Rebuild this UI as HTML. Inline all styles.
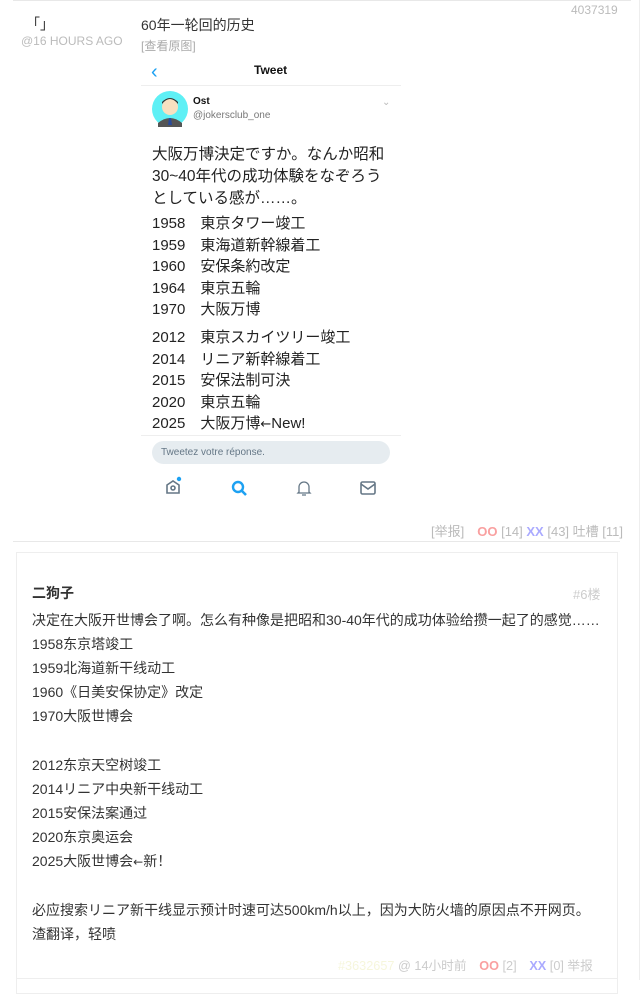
<!DOCTYPE html>
<html><head><meta charset="utf-8"><style>
body{margin:0;width:641px;height:980px;background:#fff;position:relative;overflow:hidden;font-family:"Liberation Sans","Noto Sans CJK SC",sans-serif;color:#333}
.a{position:absolute;white-space:nowrap}
.g{color:#bbb}
.tw{font-family:"Liberation Sans","Noto Sans CJK JP",sans-serif;color:#222}
.ar{font-family:"DejaVu Sans",sans-serif}
</style></head><body>
<div class="a" style="left:13px;top:0;width:618px;height:1px;background:#e8e8e8"></div>
<div class="a" style="left:639px;top:0;width:1px;height:980px;background:#eee"></div>
<div class="a g" style="left:571px;top:3px;font-size:12px">4037319</div>
<div class="a" style="left:26px;top:14px;font-size:14px;color:#333">「」</div>
<div class="a g" style="left:21px;top:34px;font-size:12px">@16 HOURS AGO</div>
<div class="a" style="left:141px;top:15px;font-size:14px">60年一轮回的历史</div>
<div class="a g" style="left:141px;top:37px;font-size:12px;color:#aaa">[查看原图]</div>

<div class="a" style="left:151px;top:61px;font-size:20px;color:#1da1f2">‹</div>
<div class="a" style="left:254px;top:63px;font-size:12px;font-weight:bold;color:#111">Tweet</div>
<div class="a" style="left:141px;top:85px;width:260px;height:1px;background:#eee"></div>
<svg class="a" style="left:152px;top:91px" width="36" height="36"><circle cx="18" cy="18" r="18" fill="#5ef0f5"/><circle cx="18" cy="16" r="8" fill="#f7e0c0"/><path d="M10 13q8-10 16 0v-2q-8-8-16 0z" fill="#333"/><path d="M6 32q12-10 24 0v4H6z" fill="#555"/><path d="M17 27h2l1 7h-4z" fill="#2a4a9a"/></svg>
<div class="a" style="left:193px;top:96px;font-size:10px;font-weight:bold;color:#111">Ost</div>
<div class="a" style="left:193px;top:110px;font-size:10px;color:#777">@jokersclub_one</div>
<div class="a" style="left:382px;top:97px;font-size:10px;color:#bbb">⌄</div>
<div class="a tw" style="left:152px;top:144px;font-size:15.5px;line-height:22px">大阪万博決定ですか。なんか昭和<br>30~40年代の成功体験をなぞろう<br>としている感が……。</div>
<div class="a tw" style="left:152px;top:213px;font-size:15px;line-height:21.5px">1958　東京タワー竣工<br>1959　東海道新幹線着工<br>1960　安保条約改定<br>1964　東京五輪<br>1970　大阪万博</div>
<div class="a tw" style="left:152px;top:327px;font-size:15px;line-height:21.5px">2012　東京スカイツリー竣工<br>2014　リニア新幹線着工<br>2015　安保法制可決<br>2020　東京五輪<br>2025　大阪万博<span class="ar" style="font-size:13px">←</span>New!</div>
<div class="a" style="left:141px;top:435px;width:260px;height:1px;background:#eee"></div>
<div class="a" style="left:152px;top:441px;width:238px;height:23px;border-radius:12px;background:#e6ecf0;font-size:10px;color:#657786;line-height:23px;text-indent:9px">Tweetez votre réponse.</div>
<svg class="a" style="left:160px;top:476px" width="230" height="22" fill="none" stroke-width="1.6">
<path d="M7 9l6-4 6 4v8H7z" stroke="#657786"/><circle cx="13" cy="12" r="2" stroke="#657786"/><circle cx="19" cy="3" r="2.2" fill="#1da1f2" stroke="none"/>
<circle cx="78" cy="11" r="5" stroke="#1da1f2" stroke-width="2.4"/><path d="M82 15l4 4" stroke="#1da1f2" stroke-width="2.6"/>
<path d="M139 16v-5a5 5 0 0 1 10 0v5l1 1h-12zM142 19h4" stroke="#657786" stroke-width="1.3"/>
<rect x="201" y="6" width="14" height="12" rx="1.5" stroke="#657786"/><path d="M201 8l7 5 7-5" stroke="#657786"/>
</svg>

<div class="a g" style="left:431px;top:521px;font-size:13px">[举报]　<b style="color:#f9a0a0">OO</b> [14] <b style="color:#aaaaff">XX</b> [43] 吐槽 [11]</div>
<div class="a" style="left:13px;top:541px;width:607px;height:1px;background:#e8e8e8"></div>

<div class="a" style="left:16px;top:552px;width:600px;height:440px;border:1px solid #eee"></div>
<div class="a" style="left:32px;top:583px;font-size:14px;font-weight:bold;color:#333">二狗子</div>
<div class="a g" style="left:573px;top:584px;font-size:13px;color:#ccc">#6楼</div>
<div class="a" style="left:32px;top:608px;font-size:14px;line-height:24.1px;color:#333">决定在大阪开世博会了啊。怎么有种像是把昭和30-40年代的成功体验给攒一起了的感觉……<br>1958东京塔竣工<br>1959北海道新干线动工<br>1960《日美安保协定》改定<br>1970大阪世博会<br><br>2012东京天空树竣工<br>2014リニア中央新干线动工<br>2015安保法案通过<br>2020东京奥运会<br>2025大阪世博会<span class="ar" style="font-size:12px">←</span>新！<br><br>必应搜索リニア新干线显示预计时速可达500km/h以上，因为大防火墙的原因点不开网页。<br>渣翻译，轻喷</div>
<div class="a" style="left:338px;top:955px;font-size:12.7px;color:#ccc"><span style="color:#f6f6dc">#3632657</span> @ 14小时前　<b style="color:#f9a0a0">OO</b> [2]　<b style="color:#aaaaff">XX</b> [0] 举报</div>
<div class="a" style="left:16px;top:978px;width:601px;height:1px;background:#eee"></div>
</body></html>
